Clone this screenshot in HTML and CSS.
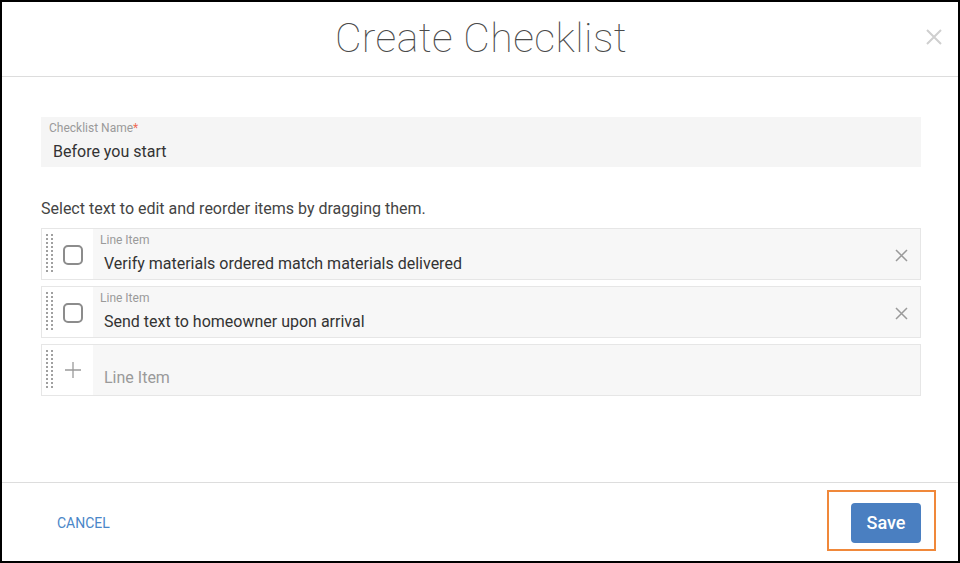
FILE: index.html
```html
<!DOCTYPE html>
<html lang="en">
<head>
<meta charset="utf-8">
<title>Create Checklist</title>
<link rel="stylesheet" href="styles.css">
</head>
<body>
<div class="modal">
  <header class="modal-header">
    <h1 class="title">Create Checklist</h1>
    <button class="close" aria-label="Close">
      <svg width="16" height="16" viewBox="0 0 16 16"><path d="M1 1L15 15M15 1L1 15" stroke="#cfcfcf" stroke-width="2" fill="none"/></svg>
    </button>
  </header>
  <main class="modal-body">
    <div class="field">
      <div class="field-label">Checklist Name<span class="req">*</span></div>
      <div class="field-value">Before you start</div>
    </div>
    <p class="hint">Select text to edit and reorder items by dragging them.</p>
    <div class="items">
      <div class="item">
        <div class="item-left">
          <span class="handle"></span>
          <span class="checkbox"></span>
        </div>
        <div class="item-main">
          <div class="item-label">Line Item</div>
          <div class="item-value">Verify materials ordered match materials delivered</div>
        </div>
        <span class="remove"><svg width="13" height="13" viewBox="0 0 13 13"><path d="M1 1L12 12M12 1L1 12" stroke="#9a9a9a" stroke-width="1.5" fill="none"/></svg></span>
      </div>
      <div class="item">
        <div class="item-left">
          <span class="handle"></span>
          <span class="checkbox"></span>
        </div>
        <div class="item-main">
          <div class="item-label">Line Item</div>
          <div class="item-value">Send text to homeowner upon arrival</div>
        </div>
        <span class="remove"><svg width="13" height="13" viewBox="0 0 13 13"><path d="M1 1L12 12M12 1L1 12" stroke="#9a9a9a" stroke-width="1.5" fill="none"/></svg></span>
      </div>
      <div class="item">
        <div class="item-left">
          <span class="handle"></span>
          <span class="plus"><svg width="18" height="18" viewBox="0 0 18 18"><path d="M9 1V17M1 9H17" stroke="#9a9a9a" stroke-width="1.3" fill="none"/></svg></span>
        </div>
        <div class="item-main new">
          <div class="item-placeholder">Line Item</div>
        </div>
      </div>
    </div>
  </main>
  <footer class="modal-footer">
    <a class="cancel" href="#">CANCEL</a>
    <span class="highlight"><button class="save">Save</button></span>
  </footer>
</div>
</body>
</html>
```
FILE: styles.css
```css
* { box-sizing: border-box; }
html, body { margin: 0; padding: 0; background: #fff; }
body { font-family: Roboto, "Liberation Sans", Arial, sans-serif; }

.modal {
  width: 960px;
  height: 563px;
  border: 2px solid #000;
  display: flex;
  flex-direction: column;
  background: #fff;
}

.modal-header {
  height: 75px;
  border-bottom: 1px solid #dddddd;
  display: flex;
  align-items: center;
  justify-content: center;
  position: relative;
  flex: none;
}
.title {
  margin: 0;
  font-weight: 100;
  font-size: 41px;
  color: #4a4a4a;
  letter-spacing: 0.4px;
  line-height: 1;
  padding-bottom: 2px;
  padding-left: 2px;
}
.close {
  position: absolute;
  right: 16px;
  top: 27px;
  border: 0;
  background: none;
  padding: 0;
  width: 16px;
  height: 16px;
  display: block;
}
.close svg { display: block; }

.modal-body {
  flex: 1;
  padding: 40px 37px 0 39px;
}

.field {
  height: 50px;
  background: #f5f5f5;
  padding: 4px 12px 0 8px;
}
.field-label {
  font-size: 12px;
  color: #9a9a9a;
  line-height: 14px;
}
.req { color: #ef6c57; }
.field-value {
  font-size: 16px;
  color: #333;
  padding-left: 4px;
  line-height: 20px;
  margin-top: 7px;
}

.hint {
  margin: 32px 0 9px;
  font-size: 16px;
  color: #444;
  line-height: 20px;
}

.items {
  display: flex;
  flex-direction: column;
  gap: 6px;
}
.item {
  height: 52px;
  border: 1px solid #e6e6e6;
  display: flex;
  position: relative;
}
.item-left {
  width: 51px;
  flex: none;
  background: #fff;
  display: flex;
  align-items: center;
  padding-left: 4px;
}
.handle {
  width: 7px;
  height: 40px;
  background-image: linear-gradient(#a0a0a0 50%, transparent 50%), linear-gradient(#a0a0a0 50%, transparent 50%);
  background-size: 2px 4px;
  background-position: 0 0, 5px 0;
  background-repeat: repeat-y;
  flex: none;
}
.checkbox {
  width: 20px;
  height: 20px;
  border: 2px solid #8c8c8c;
  border-radius: 5px;
  margin-left: 10px;
  flex: none;
  margin-top: 1px;
}
.plus {
  margin-left: 11px;
  width: 18px;
  height: 18px;
  display: block;
  flex: none;
}
.plus svg { display: block; }

.item-main {
  flex: 1;
  background: #f7f7f7;
  padding: 4px 40px 0 7px;
}
.item-label {
  font-size: 12px;
  color: #9a9a9a;
  line-height: 14px;
}
.item-value {
  font-size: 16px;
  color: #333;
  padding-left: 4px;
  line-height: 20px;
  margin-top: 7px;
}
.item-placeholder {
  font-size: 16px;
  color: #9a9a9a;
  padding-left: 4px;
  line-height: 20px;
  margin-top: 19px;
}
.remove {
  position: absolute;
  right: 12px;
  top: 20px;
  width: 13px;
  height: 13px;
}
.remove svg { display: block; }

.modal-footer {
  height: 79px;
  border-top: 1px solid #dddddd;
  flex: none;
  display: flex;
  align-items: center;
  justify-content: space-between;
  padding: 0 22px 0 55px;
}
.cancel {
  font-size: 14px;
  color: #4a86c8;
  text-decoration: none;
  line-height: 16px;
  margin-top: 1px;
}
.highlight {
  border: 2px solid #f0883a;
  padding: 11px 13px 6px 22px;
  display: block;
  margin-bottom: 3px;
}
.save {
  display: block;
  width: 70px;
  height: 40px;
  border: 0;
  border-radius: 4px;
  background: #4a7fc1;
  color: #fff;
  font-family: Roboto, "Liberation Sans", Arial, sans-serif;
  font-size: 18px;
  font-weight: 500;
  padding: 0 0 2px;
}
```
